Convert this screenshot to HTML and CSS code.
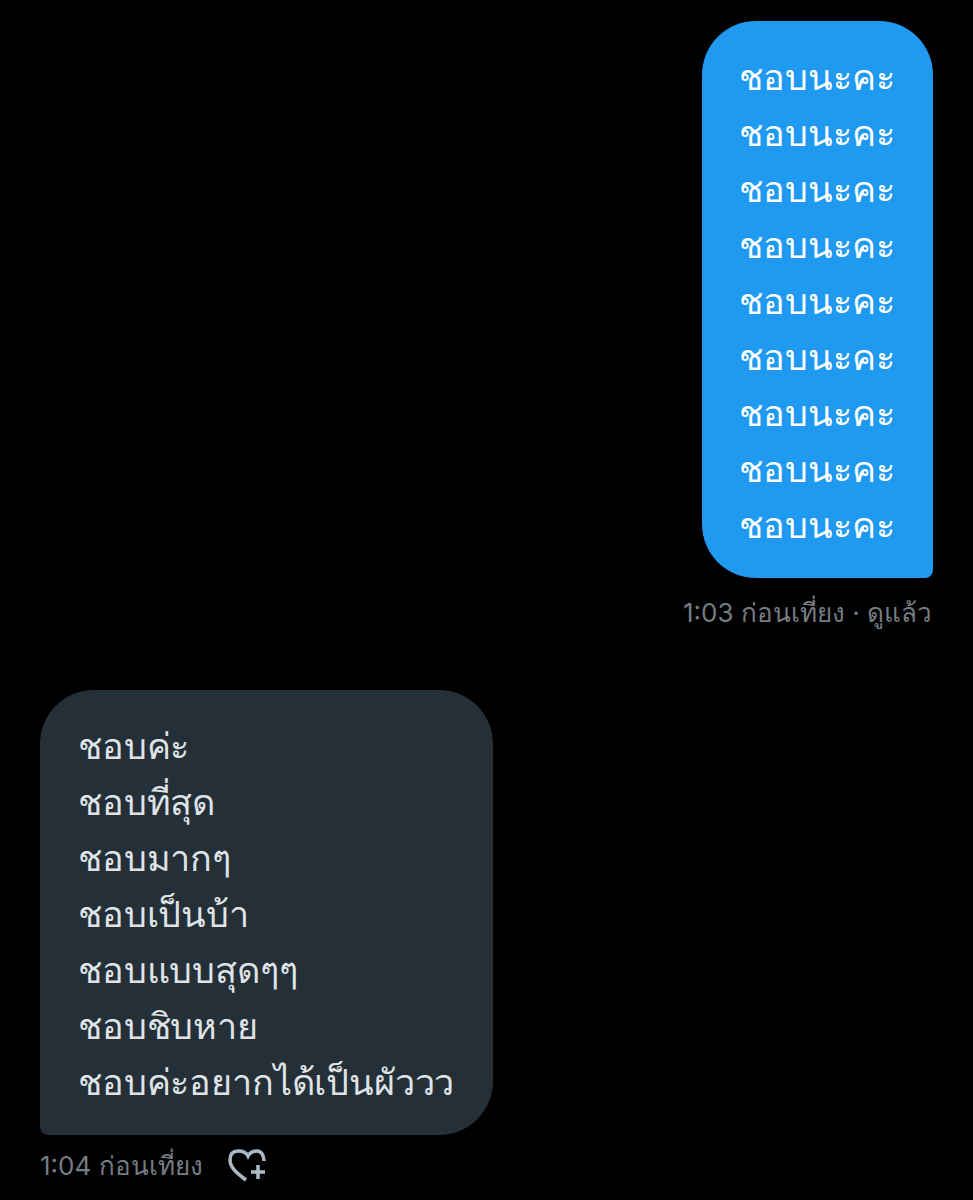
FILE: index.html
```html
<!DOCTYPE html>
<html lang="th">
<head>
    <meta charset="UTF-8">
    <meta name="viewport" content="width=device-width, initial-scale=1.0">
    <title>Messages</title>
<link rel="stylesheet" href="styles.css">
</head>

<body>
<div class="wrapper">
  <div class="msg sent">
    <div class="bubble">
      <p>ชอบนะคะ</p>
      <p>ชอบนะคะ</p>
      <p>ชอบนะคะ</p>
      <p>ชอบนะคะ</p>
      <p>ชอบนะคะ</p>
      <p>ชอบนะคะ</p>
      <p>ชอบนะคะ</p>
      <p>ชอบนะคะ</p>
      <p>ชอบนะคะ</p>
    </div>
    <div class="meta">1:03 ก่อนเที่ยง · ดูแล้ว</div>
  </div>
  <div class="msg received">
    <div class="bubble">
      <p>ชอบค่ะ</p>
      <p>ชอบที่สุด</p>
      <p>ชอบมากๆ</p>
      <p>ชอบเป็นบ้า</p>
      <p>ชอบแบบสุดๆๆ</p>
      <p>ชอบชิบหาย</p>
      <p>ชอบค่ะอยากได้เป็นผัววว</p>
    </div>
    <div class="meta">1:04 ก่อนเที่ยง
      <svg class="react" viewBox="0 0 40 36" width="40" height="36">
        <path d="M18 32 C10 26 2 20 2 12 C2 6 5 3 10 3 C14 3 18 4 20 8 C22 4 25 3 29 3 C33 3 36 7 36 13" />
        <path d="M30 17 V31 M23 24 H37" />
      </svg>
    </div>
  </div>
</div>
</body>
</html>
```

FILE: styles.css
```css
*{
	padding:0;
	margin:0;
	box-sizing:border-box;
	}
body{
	background:#000;
	font-family:"Inter","Noto Sans",sans-serif;
	}
.wrapper{
	width:973px;
	height:1200px;
	padding:21px 40px 0;
	overflow:hidden;
	}
.msg{
	display:flex;
	flex-direction:column;
	}
.sent{
	align-items:flex-end;
	margin-bottom:59px;
	}
.received{
	align-items:flex-start;
	}
.bubble{
	font-size:36px;
	line-height:56px;
	}
.sent .bubble{
	padding:28px 38px 25px 37px;
	background:#1f9af0;
	color:#fff;
	border-radius:54px 54px 8px 54px;
	}
.received .bubble{
	padding:28px 39px 25px 38px;
	background:#252f38;
	color:#dfe3e6;
	letter-spacing:-0.150px;
	border-radius:54px 54px 54px 8px;
	}
.meta{
	display:flex;
	align-items:center;
	font-size:26px;
	line-height:36px;
	margin-top:17px;
	color:#757c82;
	}
.sent .meta{
	margin-right:1px;
	}
.received .meta{
	margin-top:13px;
	}
.react{
	width:40px;
	height:36px;
	margin-left:25px;
	fill:none;
	stroke:#a9bac6;
	stroke-width:3.500;
	}
```
